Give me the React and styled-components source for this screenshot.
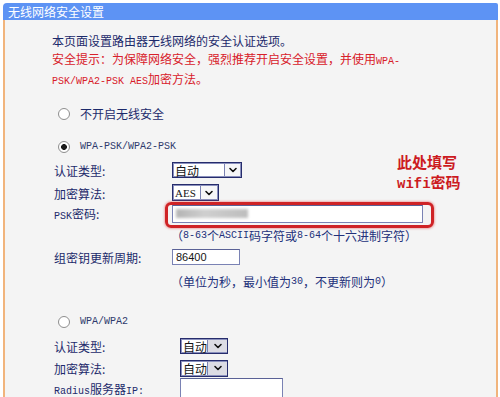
import React from "react";
import styled, { createGlobalStyle } from "styled-components";
import { ChevronDown } from "lucide-react";

const cjk = `"Noto Sans CJK SC", "Noto Sans", sans-serif`;

const GlobalStyle = createGlobalStyle`
  body {
    margin: 0;
    background: #ffffff;
  }
`;

const Frame = styled.div`
  width: 500px;
  height: 397px;
  box-sizing: border-box;
  padding: 3px 2px 0 3px;
  overflow: hidden;
  background: #ffffff;
`;

const Panel = styled.div`
  display: flex;
  flex-direction: column;
  height: 100%;
`;

const TitleBar = styled.div`
  height: 22px;
  display: flex;
  align-items: center;
  padding-left: 5px;
  background: #5d93f4;
  border-radius: 4px 2px 0 0;
  color: #ffffff;
  font-family: ${cjk};
  font-size: 12px;
`;

const Body = styled.div`
  position: relative;
  flex: 1;
  background: #f4f4f4;
  border-left: 2px solid #f1b47c;
  border-right: 2px solid #f1b47c;
  font-family: ${cjk};
  font-size: 12px;
  color: #1c2a6b;
`;

const Intro = styled.div`
  padding: 12px 0 0 47px;
  line-height: 17.5px;
`;

const Warn = styled.div`
  color: #d8202a;
`;

const Mono = styled.span`
  font-family: "Liberation Mono", monospace;
  font-size: 10px;
`;

const RadioRow = styled.div`
  display: flex;
  align-items: center;
  gap: 10px;
  height: ${(p) => p.h}px;
  margin-top: ${(p) => p.mt || 0}px;
  padding-left: 53px;
  color: ${(p) => (p.mono ? "#2e3a6c" : "#1c2a6b")};
`;

const Radio = styled.span`
  width: 12px;
  height: 12px;
  box-sizing: border-box;
  border-radius: 50%;
  border: 1px solid #8e8e8e;
  background: ${(p) =>
    p.checked
      ? "radial-gradient(circle, #1b1b1b 0 2.6px, #ffffff 3.2px)"
      : "#ffffff"};
`;

const FieldRow = styled.div`
  display: grid;
  grid-template-columns: ${(p) => p.lw}px 1fr;
  align-items: center;
  height: ${(p) => p.h}px;
  margin-top: ${(p) => p.mt || 0}px;
  padding-left: 49px;
`;

const Label = styled.span`
  line-height: 14px;
  padding-top: 2px;
  white-space: nowrap;
`;

const Control = styled.div`
  display: flex;
  align-items: center;
`;

const SelectBox = styled.span`
  display: inline-flex;
  width: ${(p) => p.w}px;
  height: ${(p) => p.h}px;
  box-sizing: border-box;
  border: 1px solid #262c6c;
  box-shadow: inset 0 0 0 1px #8a90bd;
  background: #ffffff;
  overflow: hidden;
`;

const SelectValue = styled.span`
  flex: 1;
  display: flex;
  align-items: center;
  padding-left: 2px;
  white-space: nowrap;
  color: #151515;
  font-size: ${(p) => (p.latin ? 11 : 12)}px;
  font-family: ${(p) => (p.latin ? `"Liberation Serif", serif` : cjk)};
`;

const SelectArrow = styled.span`
  flex: 0 0 ${(p) => p.w}px;
  display: flex;
  align-items: center;
  justify-content: center;
  margin: 1px 1px 1px 0;
  border-left: 1px solid #7b82b2;
  background: ${(p) => (p.gray ? "#dcdce4" : "#f6f6f8")};
  color: #111;
`;

const TextBox = styled.span`
  display: inline-flex;
  align-items: center;
  width: ${(p) => p.w}px;
  height: ${(p) => p.h}px;
  box-sizing: border-box;
  padding-left: 3px;
  border: 1px solid #7a82b4;
  border-top-color: #5a6196;
  background: #ffffff;
  color: #151515;
  font-family: "Liberation Sans", sans-serif;
  font-size: 11px;
`;

const Blurred = styled.span`
  width: 72px;
  height: 9px;
  background: linear-gradient(90deg, #b4b4b4, #cfcfcf 40%, #bdbdbd);
  filter: blur(1.4px);
`;

const Highlight = styled.span`
  display: inline-flex;
  margin-left: -7px;
  padding: 0 8px 2px 4px;
  border: 3px solid #cf2326;
  border-radius: 6px;
  box-shadow: 0 0 2px 1px rgba(230, 90, 90, 0.45);
`;

const Hint = styled.div`
  display: flex;
  align-items: center;
  height: ${(p) => p.h}px;
  padding-left: 166px;
  color: #22307a;
`;

const Note = styled.div`
  position: absolute;
  top: 132px;
  left: 392px;
  display: flex;
  flex-direction: column;
  gap: 0;
  font-family: ${cjk};
  font-size: 15px;
  font-weight: 700;
  color: #cc1b1f;
`;

const NoteLine = styled.div`
  height: 20px;
  line-height: 20px;
  overflow: visible;
`;

const NoteMono = styled.span`
  font-family: "Liberation Mono", monospace;
  font-size: 14px;
  font-weight: 700;
`;

const Select = ({ value, w, h, aw, gray, latin }) => (
  <SelectBox w={w} h={h}>
    <SelectValue latin={latin}>{value}</SelectValue>
    <SelectArrow w={aw} gray={gray}>
      <ChevronDown size={12} strokeWidth={3.2} />
    </SelectArrow>
  </SelectBox>
);

const App = () => {
  return (
    <Frame>
      <GlobalStyle />
      <Panel>
        <TitleBar>无线网络安全设置</TitleBar>
        <Body>
          <Intro>
            <div>本页面设置路由器无线网络的安全认证选项。</div>
            <Warn>
              安全提示：为保障网络安全，强烈推荐开启安全设置，并使用<Mono>WPA-</Mono>
            </Warn>
            <Warn>
              <Mono>PSK/WPA2-PSK AES</Mono>加密方法。
            </Warn>
          </Intro>

          <RadioRow h={20} mt={13}>
            <Radio />
            <span>不开启无线安全</span>
          </RadioRow>

          <RadioRow h={20} mt={13} mono>
            <Radio checked />
            <Mono>WPA-PSK/WPA2-PSK</Mono>
          </RadioRow>

          <FieldRow lw={118} h={27}>
            <Label>认证类型:</Label>
            <Control>
              <Select value="自动" w={70} h={16} aw={15} />
            </Control>
          </FieldRow>
          <FieldRow lw={118} h={18}>
            <Label>加密算法:</Label>
            <Control>
              <Select value="AES" w={47} h={17} aw={16} latin />
            </Control>
          </FieldRow>
          <FieldRow lw={118} h={24}>
            <Label>
              <Mono>PSK</Mono>密码:
            </Label>
            <Control>
              <Highlight>
                <TextBox w={251} h={18}>
                  <Blurred />
                </TextBox>
              </Highlight>
            </Control>
          </FieldRow>
          <Hint h={20}>
            （<Mono>8-63</Mono>个<Mono>ASCII</Mono>码字符或<Mono>8-64</Mono>个十六进制字符）
          </Hint>
          <FieldRow lw={118} h={22}>
            <Label>组密钥更新周期:</Label>
            <Control>
              <TextBox w={68} h={16}>86400</TextBox>
            </Control>
          </FieldRow>
          <Hint h={28}>
            （单位为秒，最小值为<Mono>30</Mono>，不更新则为<Mono>0</Mono>）
          </Hint>

          <RadioRow h={24} mt={14} mono>
            <Radio />
            <Mono>WPA/WPA2</Mono>
          </RadioRow>

          <FieldRow lw={126} h={25}>
            <Label>认证类型:</Label>
            <Control>
              <Select value="自动" w={48} h={16} aw={19} gray />
            </Control>
          </FieldRow>
          <FieldRow lw={126} h={19}>
            <Label>加密算法:</Label>
            <Control>
              <Select value="自动" w={48} h={17} aw={19} gray />
            </Control>
          </FieldRow>
          <FieldRow lw={126} h={22}>
            <Label>
              <Mono>Radius</Mono>服务器<Mono>IP:</Mono>
            </Label>
            <Control>
              <TextBox w={103} h={24} />
            </Control>
          </FieldRow>

          <Note>
            <NoteLine>此处填写</NoteLine>
            <NoteLine>
              <NoteMono>wifi</NoteMono>密码
            </NoteLine>
          </Note>
        </Body>
      </Panel>
    </Frame>
  );
};

export default App;
